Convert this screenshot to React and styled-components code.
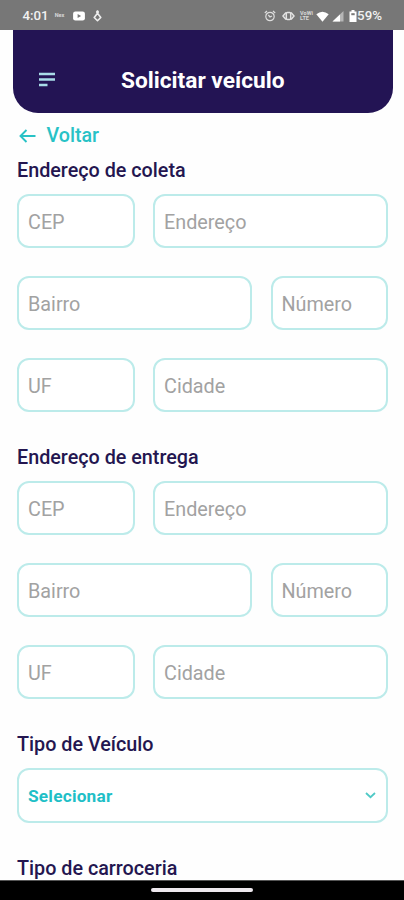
import React from "react";
import styled, { createGlobalStyle } from "styled-components";

const GlobalStyle = createGlobalStyle`
  * { box-sizing: border-box; }
  body { margin: 0; background: #fefefe; font-family: Roboto, sans-serif; overflow: hidden; }
`;

const Screen = styled.div`
  display: flex;
  flex-direction: column;
  width: 404px;
  height: 900px;
  overflow: hidden;
  background: #fefefe;
`;

const StatusBar = styled.div`
  display: flex;
  flex: none;
  justify-content: space-between;
  align-items: center;
  height: 30px;
  padding: 2px 22px 0 22.5px;
  background: #777;
  color: #f1f1f1;
`;

const StatusGroup = styled.div`
  display: flex;
  align-items: center;
`;

const StatusText = styled.span`
  font-size: 13.3px;
  line-height: 16px;
  font-weight: 500;
`;

const StatusIcon = styled.svg`
  display: block;
  flex: none;
  margin-left: ${(p) => p.$gap || 0}px;
`;

const TinyLabel = styled.span`
  display: flex;
  flex-direction: column;
  margin-left: ${(p) => p.$gap}px;
  width: 12px;
  font-size: 5.5px;
  line-height: 5.5px;
  font-weight: 700;
  color: #d8d8d8;
  white-space: nowrap;
`;

const Header = styled.header`
  display: grid;
  flex: none;
  grid-template-columns: 50px 1fr 50px;
  align-items: center;
  height: 82.5px;
  margin: 0 11.5px 0 13px;
  padding: 19px 0 0;
  border-radius: 0 0 25px 25px;
  background: #231454;
`;

const MenuButton = styled.button`
  display: flex;
  padding: 0 0 2px 26px;
  border: 0;
  background: none;
`;

const Title = styled.h1`
  margin: 0;
  text-align: center;
  font-size: 22.7px;
  line-height: 28px;
  font-weight: 700;
  color: #fff;
`;

const Content = styled.main`
  flex: 1;
  min-height: 0;
  overflow: hidden;
  padding: 10.5px 16px 0 17px;
`;

const BackLink = styled.button`
  display: flex;
  align-items: center;
  gap: 10.5px;
  height: 25px;
  padding: 0 0 0 2px;
  border: 0;
  background: none;
  color: #28c2c6;
  font-family: inherit;
  font-size: 19.7px;
  font-weight: 500;
`;

const Section = styled.section`
  margin-top: ${(p) => p.$top}px;
`;

const SectionTitle = styled.h2`
  margin: 0 0 11px;
  font-size: 19.75px;
  line-height: 24px;
  font-weight: 500;
  color: #241650;
  white-space: nowrap;
`;

const FieldGrid = styled.div`
  display: flex;
  flex-direction: column;
  gap: 28px;
`;

const FieldRow = styled.div`
  display: grid;
  grid-template-columns: ${(p) => (p.$wideFirst ? "235px 117.5px" : "117.5px 235px")};
  justify-content: space-between;
`;

const Input = styled.input`
  width: 100%;
  height: 54px;
  padding: 2px 9px 0;
  border: 2px solid #bcebea;
  border-radius: 12px;
  background: #fff;
  color: #231454;
  font-family: inherit;
  font-size: 19.8px;
  outline: none;
  &::placeholder { color: #a2a2a2; opacity: 1; }
`;

const Select = styled.button`
  display: flex;
  align-items: center;
  justify-content: space-between;
  width: 100%;
  height: 54.5px;
  padding: 1px 10.5px 0 9px;
  border: 2px solid #bcebea;
  border-radius: 12px;
  background: #fff;
  color: #1fbfc7;
  font-family: inherit;
  font-size: 17.3px;
  font-weight: 700;
  letter-spacing: 0.2px;
`;

const NavBar = styled.footer`
  display: flex;
  flex: none;
  justify-content: center;
  height: 20px;
  padding-top: 7px;
  border-top: 1px solid #555;
  background: #000;
`;

const NavHandle = styled.div`
  width: 102px;
  height: 4px;
  border-radius: 2px;
  background: #eee8ee;
`;

function AddressSection({ title, top }) {
  return (
    <Section $top={top}>
      <SectionTitle>{title}</SectionTitle>
      <FieldGrid>
        <FieldRow>
          <Input placeholder="CEP" />
          <Input placeholder="Endereço" />
        </FieldRow>
        <FieldRow $wideFirst>
          <Input placeholder="Bairro" />
          <Input placeholder="Número" />
        </FieldRow>
        <FieldRow>
          <Input placeholder="UF" />
          <Input placeholder="Cidade" />
        </FieldRow>
      </FieldGrid>
    </Section>
  );
}

function Status() {
  return (
    <StatusBar>
      <StatusGroup>
        <StatusText>4:01</StatusText>
        <TinyLabel $gap={6}>Nex</TinyLabel>
        <StatusIcon $gap={5} width="14" height="10" viewBox="0 0 14 11">
          <rect x=".5" y=".5" width="13" height="10" rx="2.5" fill="#fff" />
          <path d="M5.5 3.2v4.6L9.3 5.5z" fill="#777" />
        </StatusIcon>
        <StatusIcon $gap={7} width="9" height="12" viewBox="0 0 9 12" fill="none" stroke="#eee" strokeWidth="1.6">
          <path d="M4.5 .3v4M4.5 3.3L1.2 7.5l3.3 3.2 3.3-3.2z" strokeLinejoin="round" />
          <path d="M3 2h3" />
        </StatusIcon>
      </StatusGroup>
      <StatusGroup>
        <StatusIcon width="12" height="12" viewBox="0 0 12 12" fill="none" stroke="#ddd" strokeWidth="1.2">
          <circle cx="6" cy="6.5" r="4.2" />
          <path d="M.8 3L3 1M11.2 3L9 1M4.3 5l1.7 2 2-1" />
        </StatusIcon>
        <StatusIcon $gap={6} width="13" height="10" viewBox="0 0 13 10" fill="none" stroke="#e2e2e2" strokeWidth="1.5">
          <path d="M4 1.5L1 5l3 3.5M9 1.5L12 5 9 8.5" />
          <rect x="4.3" y="1.5" width="4.4" height="7" rx="1" />
        </StatusIcon>
        <TinyLabel $gap={5}>
          <span>VoWi</span>
          <span>LTE</span>
        </TinyLabel>
        <StatusIcon $gap={4} width="13" height="11" viewBox="0 0 13 11" fill="#fff">
          <path d="M.3 3.3Q6.5-2 12.7 3.3L6.5 10.7z" />
        </StatusIcon>
        <StatusIcon $gap={3} width="12" height="11" viewBox="0 0 12 11">
          <path d="M11.5 0v10.5H.5z" fill="#b5b5b5" />
          <path d="M8 3.5v7H.5z" fill="#fff" />
        </StatusIcon>
        <StatusIcon $gap={5} width="8" height="12" viewBox="0 0 8 12">
          <path d="M2.5 0h3v1.5h2V12h-7V1.5h2z" fill="#fff" />
          <path d="M2.3 3.2h3.4v2H2.3z" fill="#777" />
        </StatusIcon>
        <StatusText>59%</StatusText>
      </StatusGroup>
    </StatusBar>
  );
}

export default function App() {
  return (
    <>
      <GlobalStyle />
      <Screen>
        <Status />
        <Header>
          <MenuButton aria-label="Menu">
            <svg width="17" height="15" viewBox="0 0 17 15" stroke="#a9dce8" strokeWidth="2.5">
              <path d="M0 2h16M0 7.5h16M0 13h8.5" />
            </svg>
          </MenuButton>
          <Title>Solicitar veículo</Title>
        </Header>
        <Content>
          <BackLink>
            <svg width="17" height="14" viewBox="0 0 17 14" fill="none" stroke="currentColor" strokeWidth="1.9">
              <path d="M16.5 7H2M7.5 1L1.5 7l6 6" />
            </svg>
            <span>Voltar</span>
          </BackLink>
          <AddressSection title="Endereço de coleta" top={11} />
          <AddressSection title="Endereço de entrega" top={34} />
          <Section $top={34}>
            <SectionTitle>Tipo de Veículo</SectionTitle>
            <Select>
              <span>Selecionar</span>
              <svg width="11" height="7" viewBox="0 0 11 7" fill="none" stroke="#4fc9c6" strokeWidth="1.8">
                <path d="M1 1l4.5 4.2L10 1" />
              </svg>
            </Select>
          </Section>
          <Section $top={34}>
            <SectionTitle>Tipo de carroceria</SectionTitle>
          </Section>
        </Content>
        <NavBar>
          <NavHandle />
        </NavBar>
      </Screen>
    </>
  );
}
